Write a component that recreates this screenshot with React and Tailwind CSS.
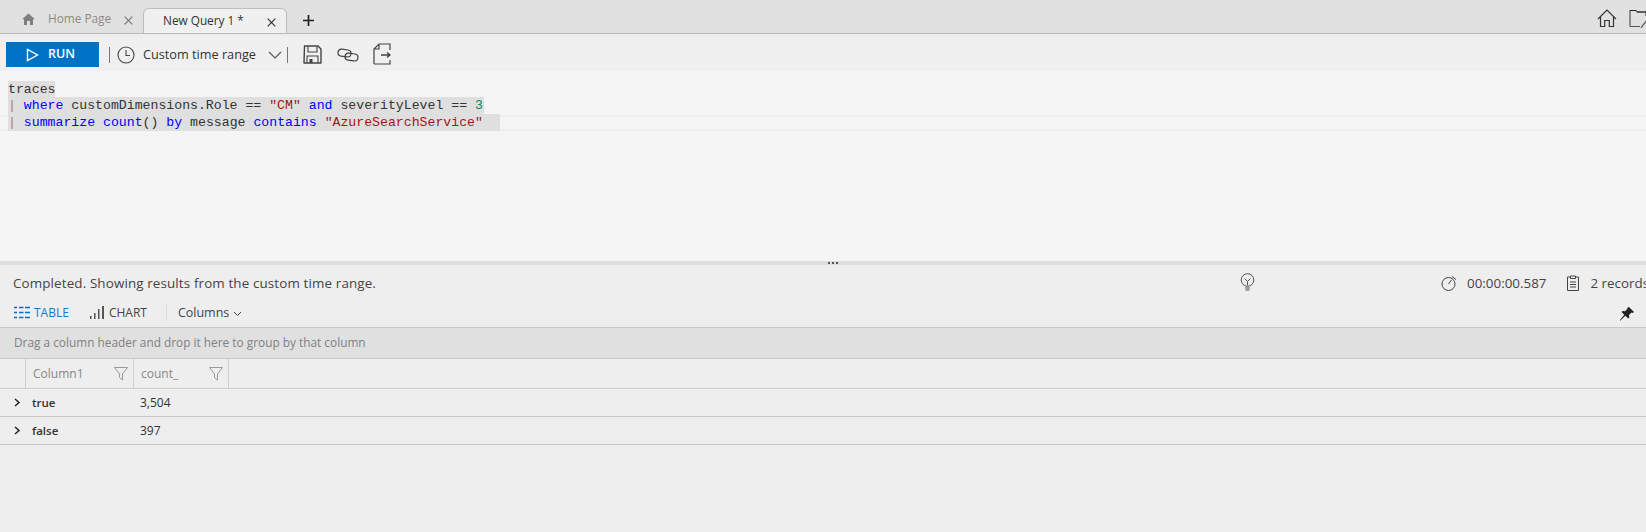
import React from "react";

const Ui = "font-['Open_Sans','Noto_Sans',sans-serif]";

function CloseX({ className }) {
  return (
    <svg width="9" height="9" viewBox="0 0 9 9" className={className} fill="none" stroke="currentColor" strokeWidth="1.2">
      <path d="M.7.7l7.6 7.6M8.3.7L.7 8.3" />
    </svg>
  );
}

function TabBar() {
  return (
    <div className="h-[34px] bg-[#e1e1e1] border-b border-[#b9b9b9] flex items-end overflow-hidden">
      <div className="w-[143px] h-[26px] pl-[22px] flex items-center text-[#8a8a8a] shrink-0 pb-[2px]">
        <svg width="13" height="12" viewBox="0 0 13 12" fill="#7f7f7f"><path d="M6.5.5L13 6.3h-2V12H8V8H5v4H2V6.3H0z" /></svg>
        <span className="ml-[13px] text-[11.8px]">Home Page</span>
        <CloseX className="ml-[13px] mt-[3px] text-[#777]" />
      </div>
      <div className="w-[144px] h-[26px] bg-[#f0f0f0] border border-b-0 border-[#bdbdbd] rounded-t-[6px] flex items-center pl-[19px] text-[#333] shrink-0 -mb-px relative pb-[2px]">
        <span className="text-[11.8px] w-[81px] whitespace-nowrap">New Query 1 *</span>
        <CloseX className="ml-[23px] mt-[3px] text-[#333]" />
      </div>
      <svg width="13" height="13" viewBox="0 0 13 13" className="ml-[15px] mb-[6px]" stroke="#222" strokeWidth="1.7"><path d="M6.5 1v11M1 6.5h11" /></svg>
      <div className="ml-auto flex items-center gap-[12px] mb-[5px] -mr-[5px]">
        <svg width="20" height="19" viewBox="0 0 20 19" fill="none" stroke="#333" strokeWidth="1.2"><path d="M1 10L10 1l9 9M3.5 8v9.5h4.2v-6h4.600v6h4.200V8" /></svg>
        <svg width="22" height="19" viewBox="0 0 22 19" fill="none" stroke="#555" strokeWidth="1.2"><path d="M1 17.500V1.500h6l1 1.500h9v4M1 17.500h10M20 9l-6 7-2 3" /><path d="M1 1.500h6M8 3h9" stroke="#222" /></svg>
      </div>
    </div>
  );
}

function Toolbar() {
  return (
    <div className="ml-[2px] mt-[4px] h-[33px] bg-[#f0f0f0] flex items-center pl-[4px] text-[#333]">
      <div className="w-[93px] h-[25px] bg-[#0072c6] flex items-center pl-[20px] text-white">
        <svg width="13" height="14" viewBox="0 0 13 14" fill="none" stroke="#fff" strokeWidth="1.4"><path d="M1.500 1.500v11L11.500 7z" /></svg>
        <span className="ml-[9px] text-[12.5px] font-semibold">RUN</span>
      </div>
      <div className="ml-[10px] w-px h-[16px] bg-[#777]" />
      <svg width="18" height="18" viewBox="0 0 18 18" className="ml-[7px]" fill="none" stroke="#444" strokeWidth="1.1"><circle cx="9" cy="9" r="8" /><path d="M9 4v5.500h4" /></svg>
      <span className="ml-[8px] text-[12.7px]">Custom time range</span>
      <svg width="14" height="8" viewBox="0 0 14 8" className="ml-[12px]" fill="none" stroke="#555" strokeWidth="1.1"><path d="M1 1l6 6 6-6" /></svg>
      <div className="ml-[5px] w-px h-[16px] bg-[#777]" />
      <svg width="19" height="19" viewBox="0 0 19 19" className="ml-[15px]" fill="none" stroke="#444" strokeWidth="1.4"><path d="M1.500 1h13.500l3 3v14H1z" strokeLinejoin="round" /><path d="M5 1v6h9V1M4 18v-7h11v7" strokeWidth="1.100" /><rect x="6.500" y="14" width="3" height="4" fill="#444" stroke="none" /></svg>
      <svg width="22" height="14" viewBox="0 0 22 14" className="ml-[15px]" fill="none" stroke="#444" strokeWidth="1.2"><rect x="1" y="1.500" width="13" height="7" rx="3.500" transform="rotate(8 7 5)" /><rect x="8" y="5.500" width="13" height="7" rx="3.500" transform="rotate(8 14 9)" /></svg>
      <svg width="18" height="22" viewBox="0 0 18 22" className="ml-[14px] mb-[2px]" fill="none" stroke="#444" strokeWidth="1.2"><path d="M1 21V6l5-5h11v6M6 1v5H1M1 21h16v-4" /><path d="M8 12h9M14 9.500l3 2.500-3 2.500" strokeWidth="1.400" /></svg>
    </div>
  );
}

function Kw({ children }) {
  return <span className="text-[#0000ff]">{children}</span>;
}
function Str({ children }) {
  return <span className="text-[#a31515]">{children}</span>;
}

function CodeLine({ children, width, pipe, h, inner }) {
  return (
    <div className={h}>
      <div className={`bg-[#dfdfdf] h-full whitespace-pre flex items-center ${inner || ""}`} style={{ width }}>
        <span>
          {pipe && <span className="text-[#b08050]">|</span>}
          {children}
        </span>
      </div>
    </div>
  );
}

function Editor() {
  return (
    <div className="h-[190px] bg-[#f5f5f5] pt-[10px] text-[#333] font-['Liberation_Mono',monospace] text-[13.2px] relative">
      <div className="absolute left-0 right-0 top-[44px] h-[16px] border-y-2 border-[#eeeeee]" />
      <div className="pl-[8px] relative">
        <CodeLine width={47} h="h-[16px]" inner="pt-[2px]">traces</CodeLine>
        <CodeLine width={476} h="h-[17px]" pipe>
          {" "}<Kw>where</Kw> customDimensions.Role == <Str>"CM"</Str> <Kw>and</Kw> severityLevel == <span className="text-[#09885a]">3</span>
        </CodeLine>
        <CodeLine width={492} h="h-[17px]" pipe>
          {" "}<Kw>summarize</Kw> <Kw>count</Kw>() <Kw>by</Kw> message <Kw>contains</Kw> <Str>"AzureSearchService"</Str>
        </CodeLine>
      </div>
    </div>
  );
}

function Splitter() {
  return (
    <div className="h-[4px] bg-[#dedede] flex justify-center items-center gap-[2px] pl-[19px]">
      <span className="w-[2px] h-[2px] bg-[#555]" />
      <span className="w-[2px] h-[2px] bg-[#555]" />
      <span className="w-[2px] h-[2px] bg-[#555]" />
    </div>
  );
}

function Status() {
  return (
    <div className="h-[36px] flex items-center pl-[13px] text-[13.4px] text-[#444] whitespace-nowrap overflow-hidden">
      <span className="tracking-[0.13px]">Completed. Showing results from the custom time range.</span>
      <svg width="15" height="18" viewBox="0 0 15 18" className="ml-[864px] -mt-[2px] shrink-0" fill="none" stroke="#555" strokeWidth="1"><circle cx="7.500" cy="7" r="6.300" /><path d="M4.500 5.500l3 3 3-3M7.500 8.500v4M5 15h5M5.500 17h4" /></svg>
      <svg width="17" height="16" viewBox="0 0 17 16" className="ml-[186px] shrink-0" fill="none" stroke="#444" strokeWidth="1"><circle cx="7.500" cy="9" r="6.500" /><path d="M7.500 9l3-4M11 1.500l4 3" /></svg>
      <span className="ml-[9px]">00:00:00.587</span>
      <svg width="12" height="16" viewBox="0 0 12 16" className="ml-[21px] shrink-0" fill="none" stroke="#444" strokeWidth="1"><path d="M3.500 2H.5v13.500h11V2h-3M3.500 1h5v2.500h-5zM3 7h6M3 9.500h6M3 12h6" /></svg>
      <span className="ml-[11px]">2 records</span>
    </div>
  );
}

function ViewTabs() {
  return (
    <div className="h-[27px] flex items-center pl-[14px] pb-[3px] text-[12px] relative border-b border-[#c8c8c8]">
      <svg width="16" height="13" viewBox="0 0 16 13" stroke="#0072c6" strokeWidth="1.300" fill="none"><path d="M0 1.500h3M5 1.500h4.500M11 1.500h5M0 6.500h3M5 6.500h4.500M11 6.500h5M0 11.500h3M5 11.500h4.500M11 11.500h5" /></svg>
      <span className="ml-[4px] text-[#1e78c2]">TABLE</span>
      <svg width="15" height="13" viewBox="0 0 15 13" className="ml-[21px]" fill="#555"><rect x="0" y="10" width="1.500" height="3" /><rect x="4" y="7" width="1.500" height="6" /><rect x="8" y="3" width="1.500" height="10" /><rect x="12" y="0" width="2" height="13" /></svg>
      <span className="ml-[4px] text-[#444]">CHART</span>
      <div className="ml-[19px] w-px h-[17px] bg-[#ddd]" />
      <span className="ml-[11px] text-[#444] text-[12.5px] mt-[1px]">Columns</span>
      <svg width="9" height="6" viewBox="0 0 9 6" className="ml-[4px] mt-[2px]" fill="none" stroke="#444" strokeWidth="1"><path d="M1 1l3.500 3.500L8 1" /></svg>
      <svg width="14" height="14" viewBox="0 0 14 14" className="absolute right-[12px] top-[6px]" fill="#222"><path d="M9 0l5 5-1.500 1-1-.5-2.500 2.500.3 2.500-1 1L5.300 8.700 1 13l-1 1 .2-1.200L4.300 7.700 1.500 5l1-1 2.500.3L7.500 1.800 7 1z" /></svg>
    </div>
  );
}

function Filter() {
  return (
    <svg width="14" height="14" viewBox="0 0 14 14" fill="none" stroke="#999" strokeWidth="1"><path d="M.5.5h13L8.500 7v6l-3-2.500V7z" /></svg>
  );
}

function Grid() {
  const headCell = "h-full border-r border-[#cfcfcf] flex items-center justify-between text-[#888]";
  const rows = [["true", "3,504"], ["false", "397"]];
  return (
    <div className="text-[12px]">
      <div className="h-[31px] bg-[#e0e0e0] border-b border-[#c8c8c8] flex items-center pl-[14px] text-[11.85px] text-[#808080]">
        Drag a column header and drop it here to group by that column
      </div>
      <div className="h-[30px] border-b border-[#cfcfcf] flex">
        <div className="w-[26px] h-full border-r border-[#cfcfcf]" />
        <div className={`w-[108px] pl-[7px] pr-[5px] ${headCell}`}><span>Column1</span><Filter /></div>
        <div className={`w-[95px] pl-[7px] pr-[5px] ${headCell}`}><span>count_</span><Filter /></div>
      </div>
      {rows.map(([a, b]) => (
        <div key={a} className="h-[28px] border-b border-[#c8c8c8] flex items-center text-[#333]">
          <svg width="7" height="9" viewBox="0 0 7 9" className="ml-[14px]" fill="none" stroke="#222" strokeWidth="1.500"><path d="M1 1l4 3.500L1 8" /></svg>
          <span className="ml-[11px] w-[108px] font-semibold text-[11.5px]">{a}</span>
          <span>{b}</span>
        </div>
      ))}
    </div>
  );
}

export default function App() {
  return (
    <div className={`w-[1646px] h-[532px] bg-[#eeeeee] overflow-hidden ${Ui}`}>
      <TabBar />
      <Toolbar />
      <Editor />
      <Splitter />
      <Status />
      <ViewTabs />
      <Grid />
    </div>
  );
}
